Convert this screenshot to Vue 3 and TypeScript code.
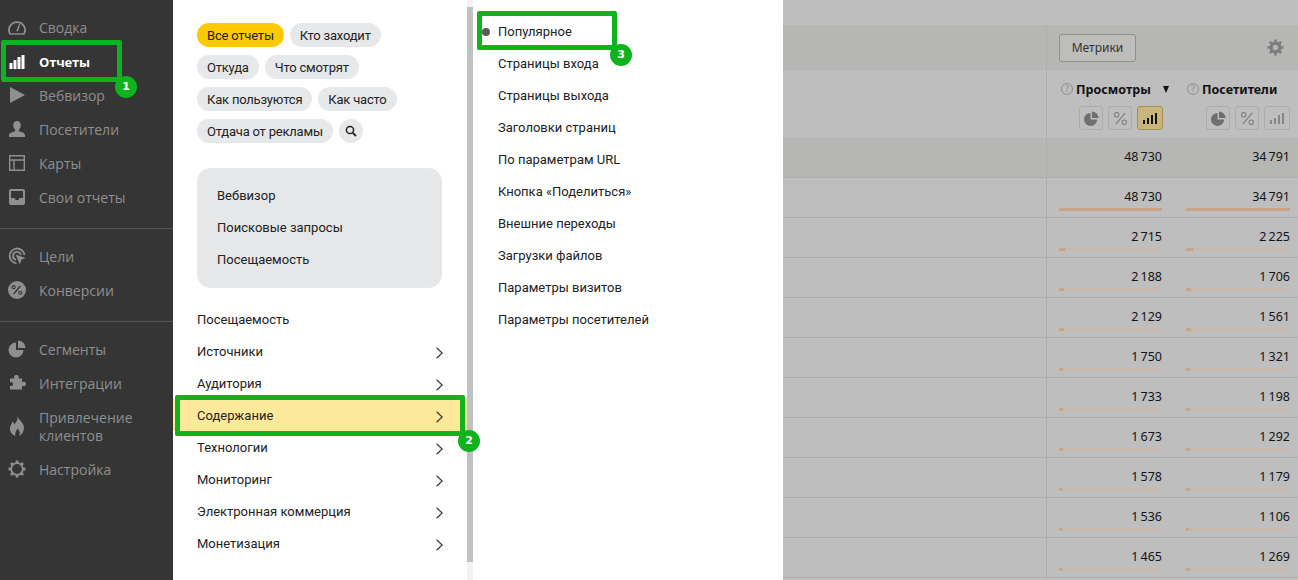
<script setup lang="ts">
interface Row { views: string; visitors: string; vp: number; up: number }
const pills: string[][] = [
  ['Все отчеты', 'Кто заходит'],
  ['Откуда', 'Что смотрят'],
  ['Как пользуются', 'Как часто'],
  ['Отдача от рекламы'],
]
const featured = ['Вебвизор', 'Поисковые запросы', 'Посещаемость']
const groups = ['Источники', 'Аудитория', 'Содержание', 'Технологии', 'Мониторинг', 'Электронная коммерция', 'Монетизация']
const sub = ['Популярное', 'Страницы входа', 'Страницы выхода', 'Заголовки страниц', 'По параметрам URL', 'Кнопка «Поделиться»', 'Внешние переходы', 'Загрузки файлов', 'Параметры визитов', 'Параметры посетителей']
const t = '\u2009'
const raw: [number, number][] = [[2715, 2225], [2188, 1706], [2129, 1561], [1750, 1321], [1733, 1198], [1673, 1292], [1578, 1179], [1536, 1106], [1465, 1269]]
const fmt = (n: number) => `${Math.floor(n / 1000)}${t}${String(n % 1000).padStart(3, '0')}`
const rows: Row[] = raw.map(([a, b]) => ({ views: fmt(a), visitors: fmt(b), vp: (a / 48730) * 100, up: (b / 34791) * 100 }))
</script>

<template>
  <div class="page">
    <aside class="side">
      <div class="side-group">
        <div class="nav">
          <svg viewBox="0 0 18 16" class="ic big"><path d="M2 15A8 8 0 1 1 16 15" fill="none" stroke="currentColor" stroke-width="1.800"/><path d="M1.500 15h15" stroke="currentColor" stroke-width="1.400"/><path d="M8.200 12 11.200 4.500l1 .4L10 12.600z" fill="currentColor"/></svg>
          <span>Сводка</span>
        </div>
        <div class="nav active">
          <svg viewBox="0 0 15 14" class="ic bars"><path d="M0 8h3v6H0zM4 5h3v9H4zM8 2h3v12H8zM12 0h3v14h-3z" fill="currentColor"/></svg>
          <span>Отчеты</span>
        </div>
        <div class="nav">
          <svg viewBox="0 0 16 16" class="ic"><path d="M1 0 16 8 1 16z" fill="currentColor"/></svg>
          <span>Вебвизор</span>
        </div>
        <div class="nav">
          <svg viewBox="0 0 16 16" class="ic"><path d="M8 0c2.400 0 3.800 1.800 3.800 4.200 0 2-1 3.800-2 4.600v1.400c2.500.7 6.200 1.500 6.200 3.800v2H0v-2c0-2.300 3.700-3.100 6.200-3.800V8.800c-1-.8-2-2.600-2-4.600C4.200 1.800 5.600 0 8 0z" fill="currentColor"/></svg>
          <span>Посетители</span>
        </div>
        <div class="nav">
          <svg viewBox="0 0 16 16" class="ic"><path d="M.7.700h14.600v14.600H.7zM.7 5h14.600M5 5v10.300" fill="none" stroke="currentColor" stroke-width="1.400"/></svg>
          <span>Карты</span>
        </div>
        <div class="nav">
          <svg viewBox="0 0 16 16" class="ic"><path fill-rule="evenodd" d="M2 0h12a2 2 0 0 1 2 2v12a2 2 0 0 1-2 2H2a2 2 0 0 1-2-2V2a2 2 0 0 1 2-2zm0 2v7h3.500l1.200 2h2.600l1.200-2H14V2z" fill="currentColor"/></svg>
          <span>Свои отчеты</span>
        </div>
      </div>
      <div class="side-group">
        <div class="nav">
          <svg viewBox="0 0 18 18" class="ic big"><path d="M8.500 16.300A7.400 7.400 0 1 1 16.400 8" fill="none" stroke="currentColor" stroke-width="1.800"/><path d="M8 12.800A4 4 0 1 1 12.900 8" fill="none" stroke="currentColor" stroke-width="1.800"/><path d="M7.500 7.500 17.500 11l-4 1.700-1.700 4.500z" fill="currentColor"/></svg>
          <span>Цели</span>
        </div>
        <div class="nav">
          <svg viewBox="0 0 16 16" class="ic big"><circle cx="8" cy="8" r="8" fill="currentColor"/><path d="M5 11.500 11 4.500" stroke="#353535" stroke-width="1.200"/><circle cx="5" cy="5.500" r="1.400" fill="none" stroke="#353535" stroke-width="1"/><circle cx="11" cy="10.500" r="1.400" fill="none" stroke="#353535" stroke-width="1"/></svg>
          <span>Конверсии</span>
        </div>
      </div>
      <div class="side-group">
        <div class="nav">
          <svg viewBox="0 0 18 18" class="ic big"><path d="M8 2.500V10h7.500A7.500 7.500 0 1 1 8 2.500z" fill="currentColor"/><path d="M10 .5a7.500 7.500 0 0 1 7.500 7.500H10z" fill="currentColor"/></svg>
          <span>Сегменты</span>
        </div>
        <div class="nav">
          <svg viewBox="0 0 18 18" class="ic big"><path d="M2 4.500h4.600C5.700 3.500 5.700 1 8.400 1s2.700 2.500 1.800 3.500H14v3.800c1-.8 4-.8 4 1.700s-3 2.500-4 1.700V15.500H2v-3.800c1.500.9 3 .3 3-1.700S3.500 7.400 2 8.300z" fill="currentColor"/></svg>
          <span>Интеграции</span>
        </div>
        <div class="nav tall">
          <svg viewBox="0 0 16 20" class="ic flame"><path d="M8.500 0c.5 3.400 4.300 5 5.900 8.900 1.600 4-.6 9.500-4.400 11 1.400-2.100 1.200-4.600-1.600-7.400-.6 2.200-2.800 3.800-2 7.400C2.600 18.400.6 15.400 1 11.700 1.300 9.100 3 7.800 3.500 5.500c1 .7 1.500 1.800 1.700 3C7.300 6.400 9 3.900 8.500 0z" fill="currentColor"/></svg>
          <span>Привлечение<br>клиентов</span>
        </div>
        <div class="nav">
          <svg viewBox="0 0 18 18" class="ic big"><circle cx="9" cy="9" r="5.800" fill="none" stroke="currentColor" stroke-width="1.800"/><path d="M9 .5v2.800M9 14.700v2.800M.5 9h2.800M14.700 9h2.800M3 3l2 2M13 13l2 2M15 3l-2 2M5 13l-2 2" stroke="currentColor" stroke-width="2.800"/></svg>
          <span>Настройка</span>
        </div>
      </div>
    </aside>

    <section class="menu">
      <div class="menu-body">
        <div v-for="(line, i) in pills" :key="i" class="pill-row">
          <span v-for="p in line" :key="p" class="pill" :class="{ on: p === 'Все отчеты' }">{{ p }}</span>
          <span v-if="i === 3" class="pill round">
            <svg viewBox="0 0 12 12" width="12" height="12"><circle cx="5" cy="5" r="3.600" fill="none" stroke="#222" stroke-width="1.500"/><path d="M7.800 7.800 11 11" stroke="#222" stroke-width="1.800"/></svg>
          </span>
        </div>
        <div class="feature">
          <div v-for="f in featured" :key="f" class="feature-item">{{ f }}</div>
        </div>
        <div class="list">
          <div class="list-item">Посещаемость</div>
          <div v-for="g in groups" :key="g" class="list-item" :class="{ sel: g === 'Содержание' }">
            <span>{{ g }}</span>
            <svg viewBox="0 0 7 12" width="7" height="12" class="chev"><path d="M.6.800 6.200 6 .6 11.200" fill="none" stroke="#333" stroke-width="1.200"/></svg>
          </div>
        </div>
      </div>
      <div class="scroll"><div class="thumb"></div></div>
    </section>

    <section class="submenu">
      <div v-for="(s, i) in sub" :key="s" class="sub-item">
        <i v-if="i === 0" class="dot"></i>{{ s }}
      </div>
    </section>

    <main class="report">
      <div class="top-band"></div>
      <div class="toolbar">
        <div class="lead"></div>
        <div class="tools">
          <span class="metrics">Метрики</span>
          <svg viewBox="0 0 18 18" width="17" height="17"><circle cx="9" cy="9" r="4.600" fill="none" stroke="#7d7d7d" stroke-width="3.400"/><path d="M9 .5v3M9 14.500v3M.5 9h3M14.500 9h3M3 3l2.100 2.100M12.900 12.900 15 15M15 3l-2.100 2.100M5.100 12.900 3 15" stroke="#7d7d7d" stroke-width="2.800"/></svg>
        </div>
      </div>
      <div class="thead">
        <div class="lead"></div>
        <div class="hcol">
          <div class="hname"><i class="help">?</i><b>Просмотры</b><em class="sort"></em></div>
          <div class="btns">
            <span class="btn"><svg viewBox="0 0 16 16" width="15" height="15"><path d="M7 2v7h7A7 7 0 1 1 7 2z" fill="#6f6f6f"/><path d="M8.500.5a7 7 0 0 1 7 7h-7z" fill="#6f6f6f"/></svg></span>
            <span class="btn"><svg viewBox="0 0 16 16" width="15" height="15"><path d="M3 14 13 2" stroke="#7d7d7d" stroke-width="1.100"/><circle cx="4" cy="4" r="2.300" fill="none" stroke="#7d7d7d" stroke-width="1.100"/><circle cx="12" cy="12" r="2.300" fill="none" stroke="#7d7d7d" stroke-width="1.100"/></svg></span>
            <span class="btn chosen"><svg viewBox="0 0 14 11" width="14" height="11"><path d="M0 7h2v4H0zM4 5h2v6H4zM8 2h2v9H8zM12 0h2v11h-2z" fill="#14140c"/></svg></span>
          </div>
        </div>
        <div class="hcol">
          <div class="hname"><i class="help">?</i><b>Посетители</b></div>
          <div class="btns">
            <span class="btn"><svg viewBox="0 0 16 16" width="15" height="15"><path d="M7 2v7h7A7 7 0 1 1 7 2z" fill="#6f6f6f"/><path d="M8.500.5a7 7 0 0 1 7 7h-7z" fill="#6f6f6f"/></svg></span>
            <span class="btn"><svg viewBox="0 0 16 16" width="15" height="15"><path d="M3 14 13 2" stroke="#7d7d7d" stroke-width="1.100"/><circle cx="4" cy="4" r="2.300" fill="none" stroke="#7d7d7d" stroke-width="1.100"/><circle cx="12" cy="12" r="2.300" fill="none" stroke="#7d7d7d" stroke-width="1.100"/></svg></span>
            <span class="btn"><svg viewBox="0 0 14 11" width="14" height="11"><path d="M0 7h2v4H0zM4 5h2v6H4zM8 2h2v9H8zM12 0h2v11h-2z" fill="#858585"/></svg></span>
          </div>
        </div>
      </div>
      <div class="row total">
        <div class="lead"></div>
        <div class="cell"><span class="num">48{{ t }}730</span></div>
        <div class="cell"><span class="num">34{{ t }}791</span></div>
      </div>
      <div class="row">
        <div class="lead"></div>
        <div class="cell"><span class="num">48{{ t }}730</span><div class="bar"><div class="fill strong"></div></div></div>
        <div class="cell"><span class="num">34{{ t }}791</span><div class="bar"><div class="fill strong"></div></div></div>
      </div>
      <div v-for="r in rows" :key="r.views" class="row">
        <div class="lead"></div>
        <div class="cell"><span class="num">{{ r.views }}</span><div class="bar"><div class="fill" :style="{ width: r.vp + '%' }"></div></div></div>
        <div class="cell"><span class="num">{{ r.visitors }}</span><div class="bar"><div class="fill" :style="{ width: r.up + '%' }"></div></div></div>
      </div>
    </main>

    <div class="mark m1"><b class="badge">1</b></div>
    <div class="mark m2"><b class="badge">2</b></div>
    <div class="mark m3"><b class="badge">3</b></div>
  </div>
</template>

<style scoped>
.page {
  position: relative;
  display: flex;
  width: 1298px;
  height: 580px;
  overflow: hidden;
  background: #fff;
  font-family: "Noto Sans", sans-serif;
}
.side {
  flex: 0 0 173px;
  background: #353535;
  color: #8f8f8f;
  font-family: "Open Sans", sans-serif;
  font-size: 14px;
}
.side-group { padding: 10px 0 14px; border-bottom: 1px solid #565656; }
.side-group:last-child { border-bottom: 0; }
.nav {
  display: flex;
  align-items: center;
  height: 34px;
  padding-left: 8px;
  gap: 13px;
}
.nav.tall { height: 52px; line-height: 18px; padding-top: 2px; box-sizing: border-box; }
.nav.tall .ic { position: relative; top: -1px; }
.nav.active { color: #fff; font-weight: 700; font-size: 13px; letter-spacing: -.2px; padding-top: 2px; box-sizing: border-box; }
.ic { width: 18px; height: 16px; flex: none; }
.ic.big { height: 18px; }
.ic.bars { height: 14px; }
.ic.flame { height: 20px; }
.menu {
  flex: 0 0 300px;
  display: flex;
  background: #fff;
  color: #222;
  font-family: "Roboto", sans-serif;
  font-size: 13px;
}
.menu-body { flex: 0 0 294px; padding-top: 23px; }
.pill-row { display: flex; gap: 6px; padding-left: 24px; margin-bottom: 8px; }
.pill {
  height: 24px;
  padding: 0 10px;
  line-height: 25px;
  border-radius: 12px;
  background: #e7e8ea;
  letter-spacing: -.2px;
}
.pill.on { background: #fdc900; }
.pill.round { width: 24px; padding: 0; display: flex; align-items: center; justify-content: center; }
.feature {
  margin: 25px 25px 0 24px;
  height: 120px;
  padding: 12px 20px;
  box-sizing: border-box;
  background: #e6e7e9;
  border-radius: 14px;
}
.feature-item { height: 32px; line-height: 31px; }
.list { margin-top: 15px; }
.list-item {
  display: flex;
  align-items: center;
  justify-content: space-between;
  height: 32px;
  padding: 0 24px 0 24px;
}
.list-item.sel { background: #fde99a; }
.chev { position: relative; top: 2px; }
.scroll { flex: 0 0 6px; background: #f2f2f2; padding-top: 7px; height: 580px; box-sizing: border-box; }
.thumb { height: 555px; background: #c1c1c1; }
.submenu {
  flex: 0 0 310px;
  box-sizing: border-box;
  padding: 15px 0 0 25px;
  background: #fff;
  color: #222;
  font-family: "Roboto", sans-serif;
  font-size: 13px;
}
.sub-item { position: relative; height: 32px; line-height: 33px; }
.dot {
  position: absolute;
  left: -16px;
  top: 13px;
  width: 8px;
  height: 8px;
  border-radius: 50%;
  background: #5c5c5c;
}
.report {
  flex: 1;
  min-width: 0;
  background: #bebebe;
  color: #141414;
  font-size: 12.5px;
}
.top-band { height: 25px; }
.toolbar { display: flex; height: 45px; background: #b6b6b4; }
.lead { flex: 0 0 264px; box-sizing: border-box; border-right: 1px solid #adadad; }
.tools { flex: 1; display: flex; align-items: center; justify-content: space-between; padding: 0 14px 0 12px; }
.metrics {
  box-sizing: border-box;
  width: 77px;
  height: 28px;
  line-height: 26px;
  font-size: 12px;
  text-align: center;
  border: 1px solid #8f8f8f;
  border-radius: 3px;
  color: #333;
  background: #bdbdbb;
}
.thead { display: flex; height: 68px; }
.hcol { flex: 0 0 127px; box-sizing: border-box; padding: 10px 0 0 14px; }
.hcol:last-child { padding-left: 13px; flex: 1; }
.hname { display: flex; align-items: center; height: 18px; gap: 3px; }
.hname b { font-size: 12.5px; color: #111; }
.help {
  box-sizing: border-box;
  width: 12px;
  height: 12px;
  border: 1px solid #8f8f8f;
  border-radius: 50%;
  color: #8f8f8f;
  font-size: 9px;
  line-height: 10px;
  text-align: center;
  font-style: normal;
}
.sort {
  width: 0;
  height: 0;
  margin-left: 9px;
  border-left: 3.500px solid transparent;
  border-right: 3.500px solid transparent;
  border-top: 7px solid #111;
}
.btns { display: flex; justify-content: flex-end; gap: 5px; margin-top: 8px; padding-right: 11px; }
.hcol:last-child .btns { padding-right: 8px; }
.btn {
  box-sizing: border-box;
  width: 24px;
  height: 24px;
  display: flex;
  align-items: center;
  justify-content: center;
  border: 1px solid #adadad;
  border-radius: 3px;
}
.btn:last-child { width: 26px; }
.btn.chosen { background: #c9b67d; border-color: #a39257; }
.row { display: flex; height: 40px; box-sizing: border-box; border-bottom: 1px solid #adadad; }
.row.total { background: #b6b6b4; }
.cell {
  flex: 0 0 127px;
  box-sizing: border-box;
  padding: 0 12px;
  text-align: right;
}
.cell:last-child { flex: 1; padding-right: 8px; }
.num { display: block; height: 30px; line-height: 38px; }
.bar { height: 3px; background: #c5b9ab; }
.fill { height: 3px; min-width: 3px; background: #c9a585; }
.fill.strong { width: 100%; }
.mark {
  position: absolute;
  box-sizing: border-box;
  border: 5px solid #0fb31e;
  border-radius: 2px;
  pointer-events: none;
}
.m1 { left: 1px; top: 40px; width: 121px; height: 42px; }
.m2 { left: 175px; top: 395px; width: 290px; height: 41px; }
.m3 { left: 477px; top: 11px; width: 140px; height: 39px; }
.badge {
  position: absolute;
  right: -20px;
  bottom: -21px;
  width: 22px;
  height: 22px;
  border-radius: 50%;
  background: #0fb31e;
  color: #fff;
  font: 700 11px/22px "DejaVu Sans", sans-serif;
  text-align: center;
}
</style>
